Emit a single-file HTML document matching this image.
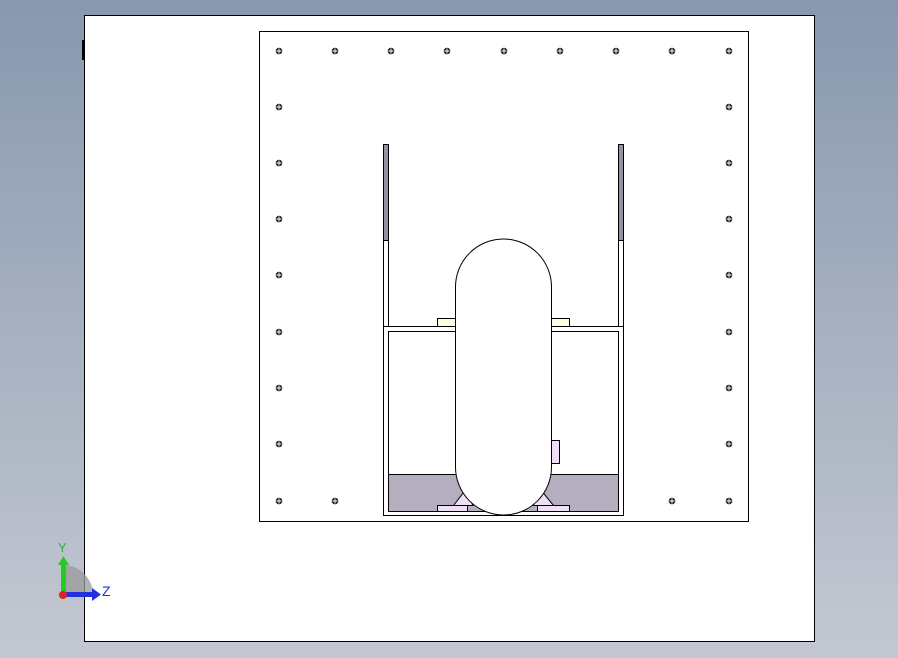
<!DOCTYPE html><html><head><style>
body{margin:0;width:898px;height:658px;overflow:hidden;background:linear-gradient(#8898ae,#c4c8d2);}
svg{position:absolute;left:0;top:0}
</style></head><body>
<svg width="898" height="658" viewBox="0 0 898 658" xmlns="http://www.w3.org/2000/svg">
<defs><g id="s"><circle cx="0" cy="0" r="3.3" fill="#222"/><path d="M-2.5 0H2.5M0-2.5V2.5" stroke="#fff" stroke-width="0.9"/></g></defs>
<rect x="84.5" y="15.5" width="730" height="626" fill="#fff" stroke="#000"/>
<rect x="82" y="40" width="2" height="20" fill="#000"/>
<rect x="259.5" y="31.5" width="489" height="490" fill="#fff" stroke="#000"/>
<g fill="#fff" stroke="#000" stroke-width="1">
<rect x="383.5" y="144.5" width="5" height="371"/>
<rect x="618.5" y="144.5" width="5" height="371"/>
<rect x="383.5" y="326.5" width="240" height="189"/>
<rect x="388.5" y="331.5" width="230" height="180"/>
</g>
<rect x="383.5" y="144.5" width="5" height="96" fill="#97929f" stroke="#000"/>
<rect x="618.5" y="144.5" width="5" height="96" fill="#97929f" stroke="#000"/>
<rect x="388.5" y="474.5" width="230" height="37" fill="#b4aebf" stroke="#000"/>
<g fill="#fffce0" stroke="#000"><rect x="437.5" y="318.5" width="18" height="8"/><rect x="551.5" y="318.5" width="18" height="8"/></g>
<g fill="#efe0f5" stroke="#000">
<rect x="437.5" y="505.5" width="30" height="6"/><rect x="537.5" y="505.5" width="32" height="6"/>
<polygon points="453.5,505.5 465.5,490 473,505.5"/><polygon points="533,505.5 541,490 553.5,505.5"/>
<rect x="551.5" y="440.5" width="8" height="23"/>
</g>
<path d="M455.5 287 A48 48 0 0 1 551.5 287 L551.5 467 A48 48 0 0 1 455.5 467 Z" fill="#fff" stroke="#000"/>
<use href="#s" x="279" y="51"/><use href="#s" x="335" y="51"/><use href="#s" x="391" y="51"/><use href="#s" x="447" y="51"/><use href="#s" x="504" y="51"/><use href="#s" x="560" y="51"/><use href="#s" x="616" y="51"/><use href="#s" x="672" y="51"/><use href="#s" x="729" y="51"/>
<use href="#s" x="279" y="107"/><use href="#s" x="279" y="163"/><use href="#s" x="279" y="219"/><use href="#s" x="279" y="275"/><use href="#s" x="279" y="332"/><use href="#s" x="279" y="388"/><use href="#s" x="279" y="444"/><use href="#s" x="279" y="501"/>
<use href="#s" x="729" y="107"/><use href="#s" x="729" y="163"/><use href="#s" x="729" y="219"/><use href="#s" x="729" y="275"/><use href="#s" x="729" y="332"/><use href="#s" x="729" y="388"/><use href="#s" x="729" y="444"/><use href="#s" x="729" y="501"/>
<use href="#s" x="335" y="501"/><use href="#s" x="672" y="501"/>
<path d="M63 565 A30 30 0 0 1 93 595 L63 595 Z" fill="#9a9a9a" opacity="0.75"/>
<rect x="61" y="562" width="5" height="33" fill="#22cc22"/>
<polygon points="58,565 63.5,556 69,565" fill="#22cc22"/>
<rect x="63" y="592" width="30" height="5" fill="#2233dd"/>
<polygon points="92,588 101,594.5 92,601" fill="#2233dd"/>
<circle cx="63" cy="595" r="4" fill="#dd2222"/>
<text x="58" y="552" font-family="Liberation Sans, sans-serif" font-size="13" fill="#22bb22">Y</text>
<text x="102" y="596" font-family="Liberation Sans, sans-serif" font-size="14" fill="#2233cc">Z</text>
</svg>
</body></html>
